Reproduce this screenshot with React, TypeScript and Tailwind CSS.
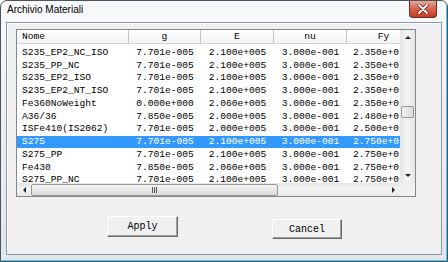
import React from 'react';

// Fy values are shown as the list clips them (column runs under the scrollbar)
const rows = [
  ['S235_EP2_NC_ISO', '7.701e-005', '2.100e+005', '3.000e-001', '2.350e+0'],
  ['S235_PP_NC', '7.701e-005', '2.100e+005', '3.000e-001', '2.350e+0'],
  ['S235_EP2_ISO', '7.701e-005', '2.100e+005', '3.000e-001', '2.350e+0'],
  ['S235_EP2_NT_ISO', '7.701e-005', '2.100e+005', '3.000e-001', '2.350e+0'],
  ['Fe360NoWeight', '0.000e+000', '2.060e+005', '3.000e-001', '2.350e+0'],
  ['A36/36', '7.850e-005', '2.000e+005', '3.000e-001', '2.480e+0'],
  ['ISFe410(IS2062)', '7.701e-005', '2.000e+005', '3.000e-001', '2.500e+0'],
  ['S275', '7.701e-005', '2.100e+005', '3.000e-001', '2.750e+0'],
  ['S275_PP', '7.701e-005', '2.100e+005', '3.000e-001', '2.750e+0'],
  ['Fe430', '7.850e-005', '2.060e+005', '3.000e-001', '2.750e+0'],
  ['S275_PP_NC', '7.701e-005', '2.100e+005', '3.000e-001', '2.750e+0'],
];

const mono = "font-['Liberation_Mono','Courier_New',monospace]";

function Arrow({ dir }: { dir: 'up' | 'down' | 'left' | 'right' }) {
  const pts = {
    up: '1,4 4,1 7,4',
    down: '1,1 4,4 7,1',
    left: '4,1 1,4 4,7',
    right: '1,1 4,4 1,7',
  }[dir];
  const vert = dir === 'up' || dir === 'down';
  return (
    <svg width={vert ? 8 : 5} height={vert ? 5 : 8} viewBox={vert ? '0 0 8 5' : '0 0 5 8'}>
      <polygon points={pts} fill="#222" />
    </svg>
  );
}

function ListView() {
  return (
    <div className={`ml-[9px] mt-[6px] w-[400px] h-[168px] border border-[#828790] bg-white flex flex-col ${mono} text-[9.6px] leading-none text-black`}>
      <div className="flex h-[153px]">
        <div className="w-[383px] overflow-hidden flex flex-col">
          {/* Header */}
          <div className="flex h-[14px] shrink-0 bg-gradient-to-b from-white to-[#f1f2f4] border-b border-[#d5d5d5] w-[403px]">
            <div className="w-[112px] border-r border-[#c5c5c5] flex items-center pl-[5px]">Nome</div>
            <div className="w-[72px] border-r border-[#c5c5c5] flex items-center justify-center">g</div>
            <div className="w-[73px] border-r border-[#c5c5c5] flex items-center justify-center">E</div>
            <div className="w-[73px] border-r border-[#c5c5c5] flex items-center justify-center">nu</div>
            <div className="w-[73px] flex items-center justify-center">Fy</div>
          </div>
          <div className="pt-[2.4px]">
            {rows.map((r, i) => {
              const sel = i === 7;
              return (
                <div
                  key={r[0]}
                  className={`flex h-[12.75px] items-center whitespace-nowrap ${sel ? 'bg-[#3399ff] text-white' : ''}`}
                >
                  <div className="w-[112px] shrink-0 pl-[5px]">{r[0]}</div>
                  <div className="w-[72px] shrink-0 text-center">{r[1]}</div>
                  <div className="w-[73px] shrink-0 text-center">{r[2]}</div>
                  <div className="w-[73px] shrink-0 text-center">{r[3]}</div>
                  <div className="w-[53px] shrink-0 pl-[6px]">{r[4]}</div>
                </div>
              );
            })}
          </div>
        </div>
        {/* Vertical scrollbar */}
        <div className="w-[15px] bg-gradient-to-r from-[#e6e6e6] via-[#f4f4f4] to-[#e6e6e6] flex flex-col">
          <div className="h-[15px] flex items-center justify-center">
            <Arrow dir="up" />
          </div>
          <div className="flex-1">
            <div className="mt-[61px] mx-[1px] h-[12px] rounded-[2px] border border-[#979797] bg-gradient-to-r from-[#f3f3f3] to-[#dadada]" />
          </div>
          <div className="h-[15px] flex items-center justify-center">
            <Arrow dir="down" />
          </div>
        </div>
      </div>
      {/* Horizontal scrollbar */}
      <div className="flex h-[13px]">
        <div className="w-[383px] bg-gradient-to-b from-[#e6e6e6] via-[#f4f4f4] to-[#e6e6e6] flex items-center">
          <div className="w-[14px] flex items-center justify-center">
            <Arrow dir="left" />
          </div>
          <div className="w-[247px] h-[12px] rounded-[2px] border border-[#979797] bg-gradient-to-b from-[#f6f6f6] to-[#d9d9d9] flex items-center justify-center">
            <div className="flex gap-[1px]">
              <div className="w-[1px] h-[6px] bg-[#555]" />
              <div className="w-[1px] h-[6px] bg-[#555]" />
              <div className="w-[1px] h-[6px] bg-[#555]" />
            </div>
          </div>
          <div className="flex-1" />
          <div className="w-[14px] flex items-center justify-center">
            <Arrow dir="right" />
          </div>
        </div>
        <div className="w-[15px] bg-[#f0f0f0]" />
      </div>
    </div>
  );
}

function Button({ label, className }: { label: string; className: string }) {
  return (
    <div
      className={`${className} bg-[#f0f0f0] border border-t-white border-l-white border-b-[#696969] border-r-[#696969] shadow-[inset_-1px_-1px_0_#a0a0a0] flex items-center justify-center ${mono} text-[10px] text-black`}
    >
      {label}
    </div>
  );
}

export default function App() {
  return (
    <div className="w-[448px] h-[262px] rounded-t-[7px] border border-[#4a5562] bg-gradient-to-b from-[#f7f9fb] via-[#e9eef3] to-[#dfe6ec] shadow-[inset_-1px_-1px_0_#52c8ee] flex flex-col overflow-hidden">
      {/* Title bar */}
      <div className="h-[21px] flex items-start justify-between">
        <div className="pl-[6px] pt-[4px] font-['Liberation_Sans',Arial,sans-serif] text-[10px] text-black leading-none">
          Archivio Materiali
        </div>
        <div className="mr-[10px] w-[28px] h-[17px] rounded-b-[4px] border border-t-0 border-[#6e2a20] bg-gradient-to-b from-[#e9a797] via-[#d4624b] to-[#c33a22] flex items-center justify-center">
          <svg width="12" height="10" viewBox="0 0 12 10">
            <path d="M2 1 L10 9 M10 1 L2 9" stroke="#5a1a12" strokeWidth="3.2" strokeLinecap="round" />
            <path d="M2 1 L10 9 M10 1 L2 9" stroke="#fff" strokeWidth="1.8" strokeLinecap="round" />
          </svg>
        </div>
      </div>
      {/* Client area */}
      <div className="mx-[5px] h-[233px] border border-[#8d98a4] bg-[#f0f0f0] shadow-[inset_1px_1px_0_#ffffff] flex flex-col">
        <ListView />
        <div className="flex items-start">
          <Button label="Apply" className="ml-[100px] mt-[19px] w-[71px] h-[21px]" />
          <Button label="Cancel" className="ml-[94px] mt-[22px] w-[70px] h-[20px]" />
        </div>
      </div>
    </div>
  );
}
